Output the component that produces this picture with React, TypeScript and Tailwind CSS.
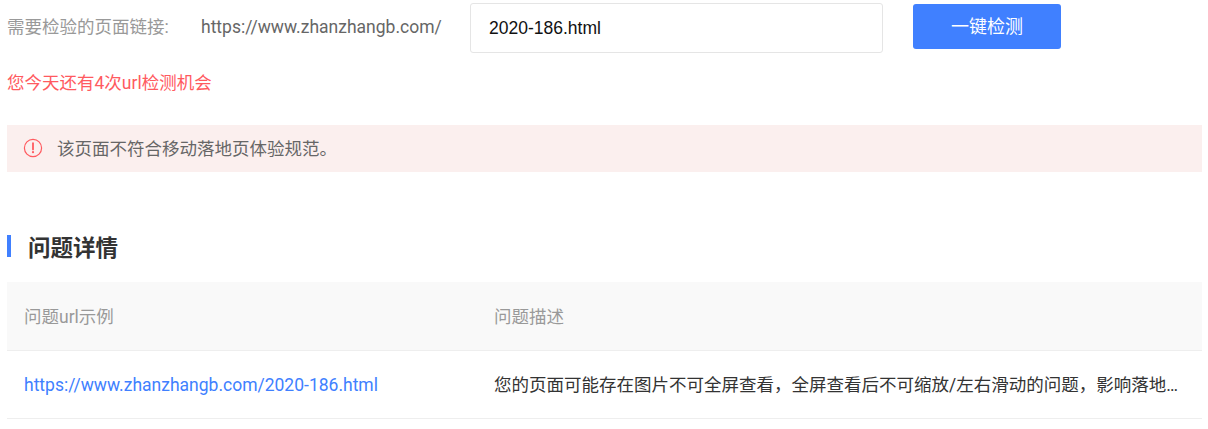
const font = "font-['Roboto','Noto_Sans_CJK_SC',sans-serif]";

const App = () => {
  return (
    <div className={`w-[1208px] h-[429px] bg-white overflow-hidden pl-[7px] pr-[6px] pt-[3px] text-[17.5px] ${font}`}>
      <div className="flex items-start h-[50px]">
        <span className="w-[194px] mt-[12px] leading-[24px] text-[#999999]">需要检验的页面链接:</span>
        <span className="w-[269px] mt-[12px] leading-[24px] text-[#666666]">https://www.zhanzhangb.com/</span>
        <div className="w-[413px] h-[50px] flex items-center border border-[#e5e5e5] rounded-[3px] pl-[18px] text-[#111111] font-['Liberation_Sans',sans-serif]">
          2020-186.html
        </div>
        <button className="ml-[30px] mt-[1px] w-[148px] h-[45px] rounded-[3px] bg-[#4080ff] text-white text-[18px]">
          一键检测
        </button>
      </div>

      <p className="mt-[18px] leading-[24px] text-[#ff5a5f]">您今天还有4次url检测机会</p>

      <div className="mt-[30px] h-[47px] flex items-center bg-[#fbefee] pl-[16px] text-[#666666]">
        <svg width="20" height="20" viewBox="0 0 20 20" fill="none" className="shrink-0 -mt-[1px]">
          <circle cx="10" cy="10" r="8.6" stroke="#ff5a5f" strokeWidth="1.2" />
          <path d="M10 5.2v6.2" stroke="#ff5a5f" strokeWidth="1.8" strokeLinecap="round" />
          <circle cx="10" cy="14.2" r="1.1" fill="#ff5a5f" />
        </svg>
        <span className="ml-[14px] pt-[1px]">该页面不符合移动落地页体验规范。</span>
      </div>

      <div className="mt-[63px] flex items-start h-[47px]">
        <div className="w-[4px] h-[22px] bg-[#4080ff]" />
        <h2 className="ml-[17px] -mt-[1px] text-[22.5px] leading-[28px] font-bold text-[#333333]">问题详情</h2>
      </div>

      <div className="flex h-[69px] items-center bg-[#f9f9f9] border-b border-[#eeeeee] text-[#999999]">
        <div className="w-[487px] pl-[17px] pt-[2px]">问题url示例</div>
        <div className="flex-1 pt-[2px]">问题描述</div>
      </div>

      <div className="flex h-[68px] items-center border-b border-[#eeeeee]">
        <div className="w-[487px] pl-[17px] pt-[2px] text-[#4080ff]">https://www.zhanzhangb.com/2020-186.html</div>
        <div className="w-[690px] pt-[2px] truncate text-[#333333]">
          您的页面可能存在图片不可全屏查看，全屏查看后不可缩放/左右滑动的问题，影响落地页体验
        </div>
      </div>
    </div>
  );
};

export default App;
